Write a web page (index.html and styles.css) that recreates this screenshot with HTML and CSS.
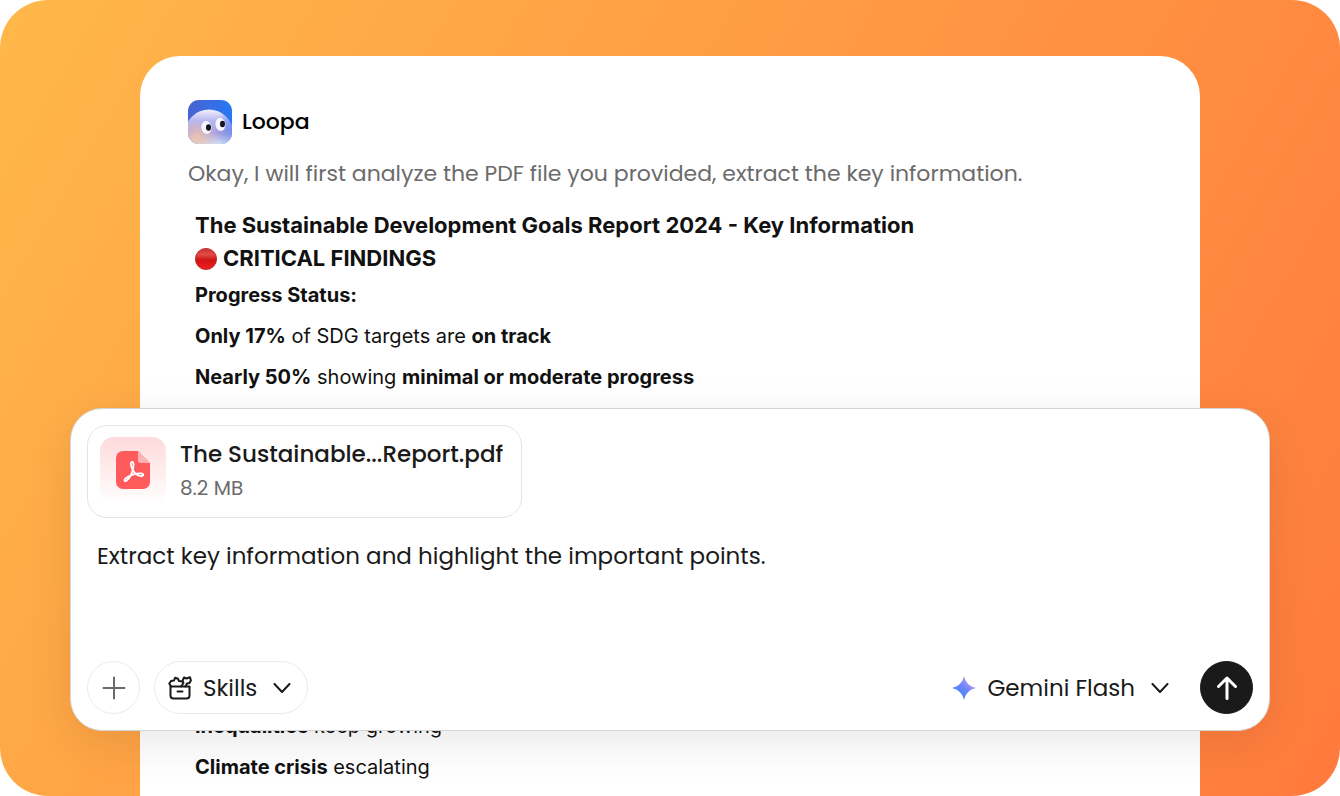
FILE: index.html
```
<!DOCTYPE html>
<html lang="en">
<head>
    <meta charset="UTF-8">
    <meta name="viewport" content="width=device-width, initial-scale=1.0">
    <title>Loopa</title>
    <link rel="stylesheet" href="styles.css">
</head>
<body>
    <div class="stage">
        <main class="chat">
            <header class="sender">
                <svg class="avatar" viewBox="0 0 44 44" aria-hidden="true">
                    <defs>
                        <linearGradient id="sky" x1="0" y1="0" x2="1" y2="0">
                            <stop offset="0" stop-color="#4a62d0"/>
                            <stop offset="1" stop-color="#2678f5"/>
                        </linearGradient>
                        <linearGradient id="face" x1="0" y1="0" x2="0" y2="1">
                            <stop offset="0" stop-color="#f0f0ff"/>
                            <stop offset="0.25" stop-color="#b4b4f0"/>
                            <stop offset="0.5" stop-color="#b3a3de"/>
                            <stop offset="0.75" stop-color="#cfe0f2"/>
                        </linearGradient>
                        <radialGradient id="warm" cx="0.25" cy="0.6" r="0.4">
                            <stop offset="0" stop-color="#f3c3a6" stop-opacity="0.9"/>
                            <stop offset="1" stop-color="#f0c4b4" stop-opacity="0"/>
                        </radialGradient>
                        <radialGradient id="cool" cx="1" cy="0.4" r="0.4">
                            <stop offset="0" stop-color="#5b86f0" stop-opacity="0.8"/>
                            <stop offset="1" stop-color="#5b86f0" stop-opacity="0"/>
                        </radialGradient>
                        <clipPath id="tile"><rect width="44" height="44" rx="11"/></clipPath>
                    </defs>
                    <g clip-path="url(#tile)">
                        <rect width="44" height="44" fill="url(#sky)"/>
                        <ellipse cx="21" cy="33" rx="24" ry="23.500" fill="url(#face)"/>
                        <ellipse cx="21" cy="33" rx="24" ry="23.500" fill="url(#cool)"/>
                        <ellipse cx="21" cy="33" rx="24" ry="23.500" fill="url(#warm)"/>
                        <ellipse cx="18.500" cy="27.500" rx="5" ry="6.500" fill="#f6f4ff" transform="rotate(-8 18 28)"/>
                        <ellipse cx="32.500" cy="24.500" rx="5" ry="6.500" fill="#f6f4ff" transform="rotate(-8 32 25)"/>
                        <ellipse cx="20.500" cy="27.500" rx="2.500" ry="3.300" fill="#17151c"/>
                        <ellipse cx="34.500" cy="24" rx="2.500" ry="3.300" fill="#17151c"/>
                    </g>
                </svg>
                <span class="sender-name">Loopa</span>
            </header>
            <p class="intro">Okay, I will first analyze the PDF file you provided, extract the key information.</p>

            <section class="report">
                <h1>The Sustainable Development Goals Report 2024 - Key Information</h1>
                <h2>
                    <svg class="dot" viewBox="0 0 22 22" aria-hidden="true">
                        <defs>
                            <linearGradient id="ball" x1="0" y1="0" x2="0" y2="1">
                                <stop offset="0" stop-color="#cf3430"/>
                                <stop offset="0.3" stop-color="#e04a45"/>
                                <stop offset="0.55" stop-color="#d01414"/>
                                <stop offset="1" stop-color="#ee2222"/>
                            </linearGradient>
                        </defs>
                        <circle cx="11" cy="11" r="10.600" fill="url(#ball)" stroke="#bd1c1c" stroke-width="0.800"/>
                    </svg>
                    CRITICAL FINDINGS
                </h2>
                <h3>Progress Status:</h3>
                <p><b>Only 17%</b> of SDG targets are <b>on track</b></p>
                <p><b>Nearly 50%</b> showing <b>minimal or moderate progress</b></p>
            </section>

            <section class="report report-end">
                <p><b>Inequalities</b> keep growing</p>
                <p><b>Climate crisis</b> escalating</p>
            </section>
        </main>

        <form class="composer">
            <div class="file">
                <div class="file-icon">
                    <svg viewBox="0 0 34 38" aria-hidden="true">
                        <path d="M7 0h15l12 12v19a7 7 0 0 1-7 7H7a7 7 0 0 1-7-7V7a7 7 0 0 1 7-7z" fill="#ff5a5c"/>
                        <path d="M22 0l12 12h-9a3 3 0 0 1-3-3z" fill="#ffb3b4"/>
                        <path d="M16.200 11c-2 0-1.500 4 .3 7.500 2.500 4.500 6 7 9.500 6.500 2-.4 1.600-2.400-.6-2.500-4.900-.3-11.900 1.500-15.900 5-2 1.800-.8 3.400 1 2.200 3-2.200 5.500-7.200 6.500-11.700.8-3.500.8-7-.8-7z" fill="none" stroke="#fff" stroke-width="1.800" stroke-linejoin="round"/>
                    </svg>
                </div>
                <div class="file-info">
                    <span class="file-name">The Sustainable...Report.pdf</span>
                    <span class="file-size">8.2 MB</span>
                </div>
            </div>

            <textarea class="prompt" rows="2" aria-label="Message">Extract key information and highlight the important points.</textarea>

            <div class="toolbar">
                <button type="button" class="round-button" aria-label="Add attachment">
                    <svg class="plus" viewBox="0 0 24 24" aria-hidden="true">
                        <path d="M12 1.500v21M1.500 12h21"/>
                    </svg>
                </button>
                <div class="picker skills">
                    <svg class="toolbox" viewBox="0 0 24 24" aria-hidden="true">
                        <path d="M2.500 10.500h19v9a3 3 0 0 1-3 3h-13a3 3 0 0 1-3-3z"/>
                        <path d="M9.500 15.500h5"/>
                        <path d="M3 10.500L1.300 7.500 3 5l3-.5 1-2.700 3 1L11 5l3 .5"/>
                        <path d="M13 10.500l2.500-3.500-1-2 1.500-3.500 2.500 1L22 1.300l.9 3.200-1.400 2.500-2.500.5-1.500 3"/>
                    </svg>
                    <select aria-label="Skills">
                        <option>Skills</option>
                    </select>
                    <svg class="chevron" viewBox="0 0 18 10" aria-hidden="true"><path d="M1.500 1L9 9l7.500-8"/></svg>
                </div>
                <div class="picker model">
                    <svg class="spark" viewBox="0 0 24 24" aria-hidden="true">
                        <defs>
                            <linearGradient id="gem" x1="0.2" y1="0.8" x2="0.8" y2="0.2">
                                <stop offset="0" stop-color="#3a86f7"/>
                                <stop offset="0.5" stop-color="#6c84fa"/>
                                <stop offset="1" stop-color="#b59af8"/>
                            </linearGradient>
                        </defs>
                        <path d="M12 0c1.500 6.500 5.500 10.500 12 12-6.500 1.500-10.500 5.500-12 12-1.500-6.500-5.500-10.500-12-12C6.500 10.500 10.500 6.500 12 0z" fill="url(#gem)"/>
                    </svg>
                    <select aria-label="Model">
                        <option>Gemini Flash</option>
                    </select>
                    <svg class="chevron" viewBox="0 0 18 10" aria-hidden="true"><path d="M1.500 1L9 9l7.500-8"/></svg>
                </div>
                <button type="submit" class="round-button send" aria-label="Send">
                    <svg class="arrow" viewBox="0 0 20 24" aria-hidden="true">
                        <path d="M10 22.500V2M1.500 10.500L10 2l8.500 8.500"/>
                    </svg>
                </button>
            </div>
        </form>
    </div>
</body>
</html>
```
FILE: styles.css
```
* {
    box-sizing: border-box;
}

body {
    margin: 0;
    background: white;
    font-family: Poppins, Inter, sans-serif;
    color: #1a1a1a;
}

h1, h2, h3, p {
    margin: 0;
}

.stage {
    position: relative;
    display: flex;
    height: 100vh;
    padding: 56px 140px 0;
    overflow: hidden;
    border-radius: 48px;
    background: linear-gradient(120deg, #ffb84a 0%, #ff9843 50%, #ff7a3d 100%);
}

/* Conversation */
.chat {
    flex: 1;
    display: flex;
    flex-direction: column;
    padding: 44px 48px 8px;
    border-radius: 40px 40px 0 0;
    background: white;
}

.sender {
    display: flex;
    align-items: center;
    gap: 10px;
}

.avatar {
    width: 44px;
    height: 44px;
}

.sender-name {
    font-size: 22px;
    font-weight: 500;
    line-height: 32px;
    color: #000;
}

.intro {
    margin-top: 13px;
    font-size: 22px;
    line-height: 34px;
    color: #6b6b6b;
}

.report {
    margin-top: 18px;
    padding-left: 7px;
    font-family: Inter, sans-serif;
    font-size: 20px;
    line-height: 41px;
    color: #111;
}

.report h1,
.report h2 {
    font-size: 22px;
    font-weight: 700;
    line-height: 33px;
}

.report h2 {
    display: flex;
    align-items: center;
    gap: 6px;
}

.report h3 {
    font-size: 20px;
    font-weight: 700;
}

.report b {
    font-weight: 700;
}

.dot {
    width: 22px;
    height: 22px;
}

.report-end {
    margin-top: auto;
}

/* Message box that lies over the conversation */
.composer {
    position: absolute;
    right: 70px;
    bottom: 65px;
    left: 70px;
    display: flex;
    flex-direction: column;
    align-items: flex-start;
    padding: 16px;
    border: 1px solid #d4d4d4;
    border-radius: 32px;
    background: white;
    box-shadow: 0 12px 48px rgba(0, 0, 0, 0.09);
}

.file {
    display: flex;
    align-items: center;
    gap: 14px;
    padding: 10px 18px 13px 12px;
    border: 1px solid #e5e5e5;
    border-radius: 20px;
}

.file-icon {
    display: flex;
    align-items: center;
    justify-content: center;
    width: 66px;
    height: 67px;
    border-radius: 14px;
    background: linear-gradient(#ffdadb, #fff);
}

.file-icon svg {
    width: 34px;
    height: 38px;
}

.file-info {
    display: flex;
    flex-direction: column;
}

.file-name {
    font-size: 23px;
    font-weight: 500;
    line-height: 36px;
}

.file-size {
    font-size: 20px;
    line-height: 32px;
    color: #6b6b6b;
}

.prompt {
    width: 100%;
    height: 108px;
    margin: 20px 0 15px;
    padding: 0 10px;
    border: none;
    outline: none;
    resize: none;
    background: none;
    font: inherit;
    font-size: 23px;
    line-height: 36px;
    color: inherit;
}

.toolbar {
    display: flex;
    align-items: center;
    gap: 14px;
    width: 100%;
}

.round-button {
    display: flex;
    align-items: center;
    justify-content: center;
    width: 53px;
    height: 53px;
    padding: 0;
    border: 1px solid #ebebeb;
    border-radius: 50%;
    background: white;
    cursor: pointer;
}

.picker {
    display: flex;
    align-items: center;
    gap: 11px;
    height: 53px;
}

.picker select {
    field-sizing: content;
    padding: 0;
    border: none;
    outline: none;
    appearance: none;
    background: none;
    font: inherit;
    font-size: 23px;
    color: inherit;
    cursor: pointer;
}

.picker svg,
.round-button svg {
    flex: none;
}

.skills {
    padding: 0 16px 0 13px;
    border: 1px solid #ebebeb;
    border-radius: 27px;
}

.model {
    margin-left: auto;
    padding-right: 17px;
}

.chevron {
    width: 18px;
    height: 10px;
    margin-left: 5px;
    pointer-events: none;
}

.plus,
.toolbox,
.spark {
    width: 24px;
    height: 24px;
}

.arrow {
    width: 20px;
    height: 24px;
}

.plus path,
.toolbox path,
.chevron path,
.arrow path {
    fill: none;
    stroke: #1a1a1a;
    stroke-width: 2;
    stroke-linecap: round;
    stroke-linejoin: round;
}

.plus path {
    stroke: #6b6b6b;
}

.send {
    border-color: #1a1a1a;
    background: #1a1a1a;
}

.arrow path {
    stroke: white;
    stroke-width: 3;
}
```
